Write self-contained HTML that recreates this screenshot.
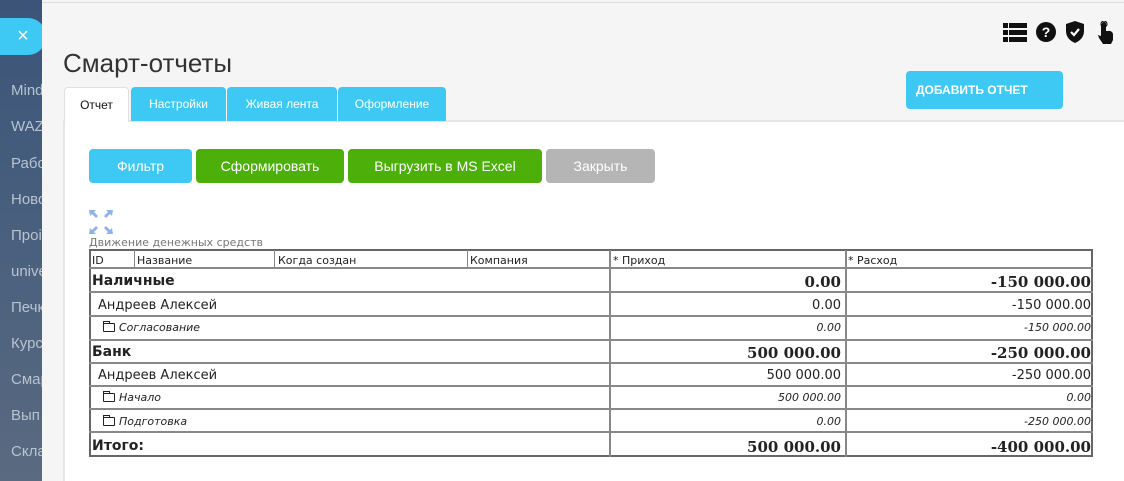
<!DOCTYPE html>
<html><head><meta charset="utf-8"><style>
*{margin:0;padding:0;box-sizing:border-box}
body{width:1124px;height:481px;overflow:hidden;background:#f5f5f5;font-family:"Liberation Sans",sans-serif;position:relative}
.side{position:absolute;left:0;top:0;width:42px;height:481px;background:linear-gradient(#3b5478,#49607e 50%,#5a6a80);overflow:hidden}
.side div{position:absolute;left:11px;color:#b9c3d0;font-size:15px;white-space:nowrap}
.close{position:absolute;left:0;top:18px;width:46px;height:37px;background:#3ec8f4;border-radius:0 18px 18px 0;color:#fff;font-size:20px;text-align:center;line-height:36px;padding-left:0}
.panel{position:absolute;left:42px;top:2px;right:0;bottom:0;background:#f5f5f5;border-top:1px solid #ddd}
h1{position:absolute;left:63px;top:48px;font-weight:normal;font-size:26px;color:#333}
.tab{position:absolute;top:87px;height:34px;background:#3ec8f4;color:#fff;font-size:12px;text-align:center;line-height:34px;border-radius:4px 4px 0 0}
.content{position:absolute;left:63px;top:120px;right:0;bottom:0;background:#fff;border-top:2px solid #e6e6e6;border-left:2px solid #e6e6e6}
.btn{position:absolute;top:149px;height:34px;border-radius:4px;color:#fff;font-size:14px;text-align:center;line-height:34px}
.t{position:absolute;font-family:"DejaVu Sans",Verdana,sans-serif;color:#222;white-space:nowrap}
.hl{position:absolute;left:89px;width:1004px;height:2px;background:#888}
.vl{position:absolute;width:2px;background:#888}
.f{display:inline-block;width:12px;height:9px;border:1px solid #222;border-radius:1px;margin-right:4px;vertical-align:-1px;position:relative}
.f:before{content:"";position:absolute;left:-1px;top:-3px;width:5px;height:2px;border:1px solid #222;border-bottom:none}
</style></head><body>
<div class="side">
<div style="top:82px">Mind</div><div style="top:118px">WAZ</div><div style="top:155px">Рабо</div><div style="top:191px">Ново</div><div style="top:227px">Проі</div><div style="top:263px">unive</div><div style="top:299px">Печк</div><div style="top:335px">Курс</div><div style="top:371px">Смар</div><div style="top:407px">Вып</div><div style="top:443px">Скла</div>
</div>
<div class="close">×</div>
<div class="panel"></div>
<svg style="position:absolute;left:1003px;top:23px" width="24" height="20" viewBox="0 0 24 20"><g fill="#111"><rect x="0" y="0" width="5" height="5"/><rect x="6" y="0" width="18" height="5"/><rect x="0" y="7" width="5" height="5"/><rect x="6" y="7" width="18" height="5"/><rect x="0" y="14" width="5" height="5"/><rect x="6" y="14" width="18" height="5"/></g></svg>
<svg style="position:absolute;left:1036px;top:22px" width="20" height="20" viewBox="0 0 20 20"><circle cx="10" cy="10" r="10" fill="#111"/><text x="10" y="15" fill="#fff" font-size="14" font-weight="bold" text-anchor="middle" font-family="Liberation Sans">?</text></svg>
<svg style="position:absolute;left:1066px;top:21px" width="18" height="22" viewBox="0 0 18 22"><path d="M9 0L18 3V10C18 16 14 20 9 22C4 20 0 16 0 10V3Z" fill="#111"/><path d="M5 11L8 14L13 8" stroke="#fff" stroke-width="2.2" fill="none"/></svg>
<svg style="position:absolute;left:1096px;top:21px" width="18" height="24" viewBox="0 0 18 24"><path d="M6 3a2 2 0 0 1 4 0v7h2a4 4 0 0 1 5 3v6l-2 4H7L3 17l-1-3 3 1V3z" fill="#111"/><circle cx="8" cy="3" r="3" fill="none" stroke="#111" stroke-width="1.2"/></svg>
<h1>Смарт-отчеты</h1>
<div class="content"></div>
<div class="tab" style="left:64px;width:65px;background:#fff;color:#111;border:1px solid #e0e0e0;border-bottom:none;height:35px">Отчет</div>
<div class="tab" style="left:131px;width:95px">Настройки</div>
<div class="tab" style="left:227px;width:110px">Живая лента</div>
<div class="tab" style="left:338px;width:108px">Оформление</div>
<div style="position:absolute;left:906px;top:71px;width:157px;height:38px;background:#3ec8f4;border-radius:4px;color:#fff;font-size:12px;font-weight:bold;line-height:38px;padding-left:10px">ДОБАВИТЬ ОТЧЕТ</div>
<div class="btn" style="left:89px;width:103px;background:#3ec8f4">Фильтр</div>
<div class="btn" style="left:196px;width:148px;background:#4caf0a">Сформировать</div>
<div class="btn" style="left:348px;width:194px;background:#4caf0a">Выгрузить в MS Excel</div>
<div class="btn" style="left:546px;width:109px;background:#b5b5b5">Закрыть</div>
<svg style="position:absolute;left:89px;top:210px" width="24" height="24" viewBox="0 0 24 24"><g fill="#8fb3e6"><path d="M0 0h7L5 2l4 4-2 2-4-4-2 2z"/><path d="M24 0h-7l2 2-4 4 2 2 4-4 2 2z"/><path d="M0 24h7l-2-2 4-4-2-2-4 4-2-2z"/><path d="M24 24h-7l2-2-4-4 2-2 4 4 2-2z"/></g></svg>
<div class="t" style="left:89px;top:236px;font-size:11px;color:#777">Движение денежных средств</div>
<div style="position:absolute;left:89px;top:249px;width:1004px;height:208px;border:2px solid #666"></div>
<div class="hl" style="top:267px"></div><div class="hl" style="top:291px"></div><div class="hl" style="top:315px"></div><div class="hl" style="top:339px"></div><div class="hl" style="top:362px"></div><div class="hl" style="top:385px"></div><div class="hl" style="top:408px"></div><div class="hl" style="top:431px"></div>
<div class="vl" style="left:134px;top:250px;height:18px;width:1px"></div><div class="vl" style="left:274px;top:250px;height:18px;width:1px"></div><div class="vl" style="left:467px;top:250px;height:18px;width:1px"></div>
<div class="vl" style="left:609px;top:250px;height:207px"></div><div class="vl" style="left:845px;top:250px;height:207px"></div>
<div class="t" style="left:92px;top:254px;font-size:11px">ID</div>
<div class="t" style="left:137px;top:254px;font-size:11px">Название</div>
<div class="t" style="left:278px;top:254px;font-size:11px">Когда создан</div>
<div class="t" style="left:470px;top:254px;font-size:11px">Компания</div>
<div class="t" style="left:613px;top:254px;font-size:11px">* Приход</div>
<div class="t" style="left:848px;top:254px;font-size:11px">* Расход</div>
<div class="t" style="left:92px;top:273px;font-size:14px;font-weight:bold">Наличные</div>
<div class="t" style="left:98px;top:298px;font-size:13px">Андреев Алексей</div>
<div class="t" style="left:103px;top:321px;font-size:11px;font-style:italic"><span class="f"></span>Согласование</div>
<div class="t" style="left:92px;top:344px;font-size:14px;font-weight:bold">Банк</div>
<div class="t" style="left:98px;top:368px;font-size:13px">Андреев Алексей</div>
<div class="t" style="left:103px;top:391px;font-size:11px;font-style:italic"><span class="f"></span>Начало</div>
<div class="t" style="left:103px;top:415px;font-size:11px;font-style:italic"><span class="f"></span>Подготовка</div>
<div class="t" style="left:92px;top:438px;font-size:14px;font-weight:bold">Итого:</div>
<div class="t" style="right:283px;top:273px;font-size:15px;font-weight:bold;font-family:'DejaVu Serif',serif">0.00</div>
<div class="t" style="right:33px;top:273px;font-size:15px;font-weight:bold;font-family:'DejaVu Serif',serif">-150 000.00</div>
<div class="t" style="right:283px;top:298px;font-size:13px">0.00</div>
<div class="t" style="right:33px;top:298px;font-size:13px">-150 000.00</div>
<div class="t" style="right:283px;top:321px;font-size:11px;font-style:italic">0.00</div>
<div class="t" style="right:33px;top:321px;font-size:11px;font-style:italic">-150 000.00</div>
<div class="t" style="right:283px;top:344px;font-size:15px;font-weight:bold;font-family:'DejaVu Serif',serif">500 000.00</div>
<div class="t" style="right:33px;top:344px;font-size:15px;font-weight:bold;font-family:'DejaVu Serif',serif">-250 000.00</div>
<div class="t" style="right:283px;top:368px;font-size:13px">500 000.00</div>
<div class="t" style="right:33px;top:368px;font-size:13px">-250 000.00</div>
<div class="t" style="right:283px;top:391px;font-size:11px;font-style:italic">500 000.00</div>
<div class="t" style="right:33px;top:391px;font-size:11px;font-style:italic">0.00</div>
<div class="t" style="right:283px;top:415px;font-size:11px;font-style:italic">0.00</div>
<div class="t" style="right:33px;top:415px;font-size:11px;font-style:italic">-250 000.00</div>
<div class="t" style="right:283px;top:438px;font-size:15px;font-weight:bold;font-family:'DejaVu Serif',serif">500 000.00</div>
<div class="t" style="right:33px;top:438px;font-size:15px;font-weight:bold;font-family:'DejaVu Serif',serif">-400 000.00</div>
</body></html>
